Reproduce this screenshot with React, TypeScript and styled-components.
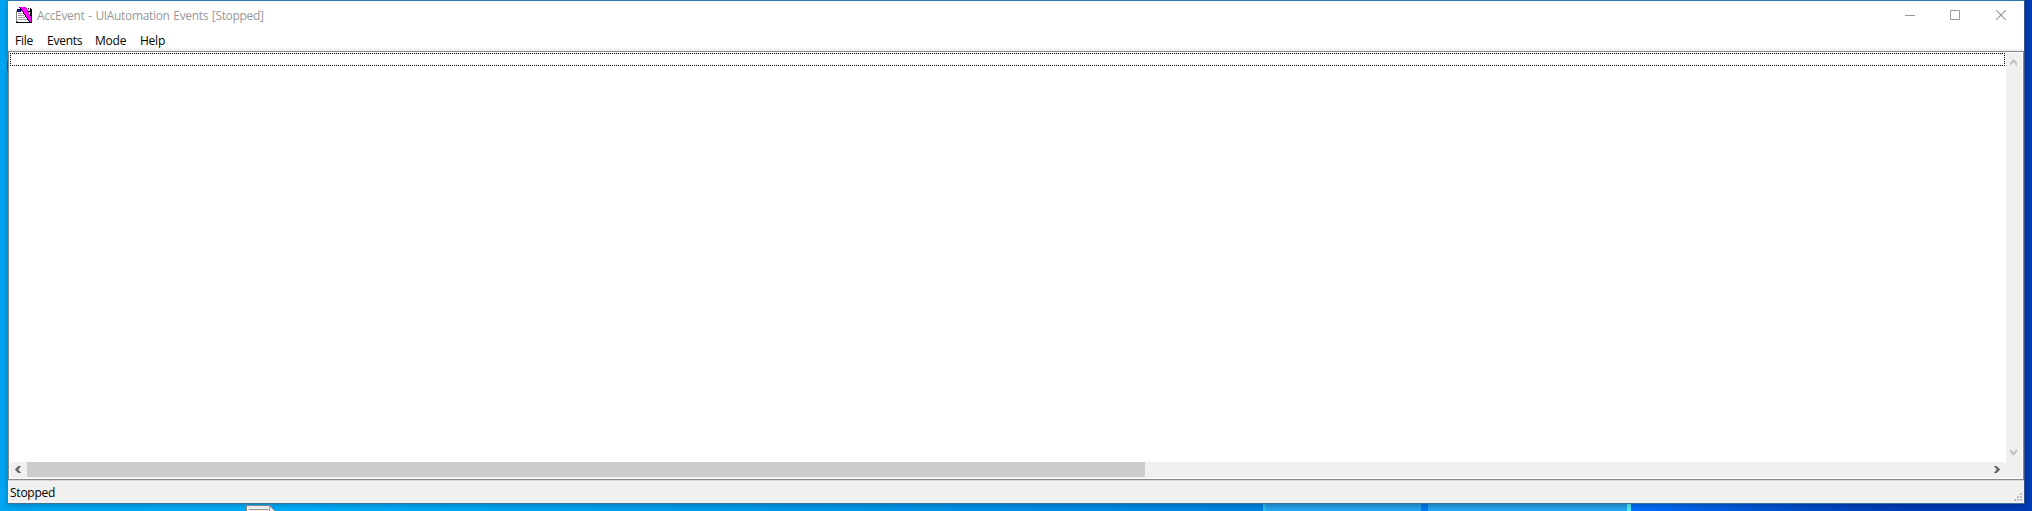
import React from 'react';
import styled, { createGlobalStyle } from 'styled-components';

const GlobalStyle = createGlobalStyle`
  html, body { margin: 0; padding: 0; overflow: hidden; }
  * { box-sizing: border-box; }
`;

const Desktop = styled.div`
  position: relative;
  width: 2032px;
  height: 511px;
  padding: 0 7px 0 8px;
  overflow: hidden;
  font: 12px/16px "Open Sans", "Noto Sans", sans-serif;
  letter-spacing: -0.24px;
  color: #000;
  background: linear-gradient(90deg, #00a4f0 0, #00acf8 300px, #009cec 700px, #0084e0 1240px, #006cf8 1640px, #0050cc 1780px, #003cb4 1900px, #003cb4 2032px);
`;

const AppWindow = styled.main`
  position: relative;
  display: flex;
  flex-direction: column;
  height: 504px;
  background: #fff;
  border-top: 1px solid #2b76a8;
  border-right: 1px solid #33528c;
  border-bottom: 1px solid #3d7292;
  box-shadow: 0 1px 5px rgba(0, 0, 0, 0.26);
`;

const TitleBar = styled.header`
  display: flex;
  flex: none;
  align-items: center;
  height: 28px;
  padding-left: 8px;
`;

const Title = styled.h1`
  flex: 1;
  margin: 2px 0 0 5px;
  font-size: 12px;
  font-weight: 400;
  letter-spacing: -0.33px;
  word-spacing: 0.9px;
  color: #999;
`;

const CaptionButton = styled.button`
  width: 46px;
  height: 28px;
  padding: 0;
  border: 0;
  background: none;
  display: grid;
  place-items: center;
`;

const MenuBar = styled.nav`
  display: flex;
  flex: none;
  height: 20px;
  padding-left: 7px;
`;

const MenuItem = styled.span<{ $width: number }>`
  width: ${p => p.$width}px;
  line-height: 24px;
`;

const ListFrame = styled.section`
  display: grid;
  flex: none;
  grid-template: 409px 16px / minmax(0, 1fr) 16px;
  height: 429px;
  padding: 1px;
  border: 1px solid #828790;
  box-shadow: 0 -2px #f0f0f0;
  margin-top: 2px;
`;

const EventList = styled.div`
  padding-right: 1px;
`;

const FocusRow = styled.div`
  height: 13px;
  background:
    repeating-linear-gradient(90deg, #000 0 1px, #fff 1px 2px) top / 100% 1px no-repeat,
    repeating-linear-gradient(90deg, #000 0 1px, #fff 1px 2px) bottom / 100% 1px no-repeat,
    repeating-linear-gradient(#000 0 1px, #fff 1px 2px) left / 1px 100% no-repeat,
    repeating-linear-gradient(#000 0 1px, #fff 1px 2px) right / 1px 100% no-repeat;
`;

const VerticalBar = styled.div`
  display: flex;
  flex-direction: column;
  justify-content: space-between;
  align-items: flex-start;
  padding: 6px 0 6px 4px;
  background: #f0f0f0;
`;

const HorizontalBar = styled.div`
  display: grid;
  grid-template-columns: 17px 1fr 17px;
  grid-column: 1 / 3;
  height: 16px;
  padding-right: 16px;
  background: #f0f0f0;
`;

const ArrowCell = styled.div`
  padding: 4px 0 0 5px;
  line-height: 0;
`;

const Thumb = styled.div`
  width: 1118px;
  height: 15px;
  background: #cdcdcd;
`;

const StatusBar = styled.footer`
  display: flex;
  flex: none;
  justify-content: space-between;
  align-items: flex-end;
  height: 23px;
  padding: 0 2px 2px 2px;
  background: #f0f0f0;
  border-top: 1px solid #d7d7d7;
`;

const StatusText = styled.span`
  height: 16px;
`;

const TaskPane = styled.div<{ $left: number; $width: number; $edge?: 'left' | 'right' }>`
  position: absolute;
  top: 503px;
  left: ${p => p.$left}px;
  width: ${p => p.$width}px;
  height: 8px;
  background: linear-gradient(#2598dc, #22a8f2);
  border-left: ${p => (p.$edge === 'left' ? '3px solid #28b8e4' : '0')};
  border-right: ${p => (p.$edge === 'right' ? '4px solid #48eaf0' : '0')};
`;

const DocumentIcon = styled.svg`
  position: absolute;
  left: 246px;
  top: 505px;
`;

const HiddenGlyph = styled.i`
  position: absolute;
  left: 7px;
  top: 61px;
  width: 1px;
  height: 10px;
  background: #174a7e;
`;

const AppIcon = () => (
  <svg width="16" height="16" shapeRendering="crispEdges">
    <path fill="#808080" d="M0 4h2v11H0z" />
    <path fill="#fff" d="M1 5h13v9H1z" />
    <path fill="#000080" d="M1 2h4v3H1z" />
    <path fill="#a0a0a0" d="M2 6h4v1H2zm0 2h6v1H2zm0 2h7v1H2zm0 2h9v1H2zM11 6h2v1h-2zm1 2h1v1h-1z" />
    <path fill="#c0c0c0" d="M10 2h4v2h-4z" />
    <path fill="#000" d="M14 2h2v14H0v-1h14zM10 1h1v1h-1zM12 1h1v1h-1zM14 1h1v1h-1z" />
    <path fill="#000" d="M3 0h1l10 14v1h-1z" />
    <path fill="#f0f" d="M4 0h6l5 10v5h-1z" />
    <path fill="#000" d="M11 4h3v1h-3z" />
  </svg>
);

const paths = {
  up: 'M0 4l3.5-4L7 4v2.5L3.5 3 0 6.5z',
  down: 'M0 0l3.5 3.5L7 0v2.5l-3.5 4L0 2.5z',
  left: 'M3.5 0H6L3 3.5 6 7H3.5L0 3.5z',
  right: 'M0 0h2.5L6 3.5 2.5 7H0l3-3.5z',
};

const Arrow = ({ direction }: { direction: keyof typeof paths }) => {
  const vertical = direction === 'up' || direction === 'down';
  const color = vertical ? '#bfbfbf' : '#606060';
  return (
    <svg width={vertical ? 7 : 6} height={7}>
      <path d={paths[direction]} fill={color} stroke={color} strokeWidth=".3" />
    </svg>
  );
};

const MinimizeIcon = styled.svg`
  margin-left: 1px;
`;

const menus = [
  { label: 'File', width: 32 },
  { label: 'Events', width: 48 },
  { label: 'Mode', width: 45 },
  { label: 'Help', width: 40 },
];

export default function App() {
  return (
    <Desktop>
      <GlobalStyle />
      <TaskPane $left={1263} $width={158} $edge="left" />
      <TaskPane $left={1428} $width={203} $edge="right" />
      <AppWindow>
        <TitleBar>
          <AppIcon />
          <Title>AccEvent - UIAutomation Events [Stopped]</Title>
          <CaptionButton aria-label="Minimize">
            <MinimizeIcon width="10" height="10"><path d="M0 5.5h10" stroke="#999" /></MinimizeIcon>
          </CaptionButton>
          <CaptionButton aria-label="Maximize">
            <svg width="10" height="10"><path d="M.5.5h9v9h-9z" fill="none" stroke="#999" /></svg>
          </CaptionButton>
          <CaptionButton aria-label="Close">
            <svg width="10" height="10"><path d="M0 0l10 10M10 0L0 10" stroke="#999" strokeWidth="1.1" /></svg>
          </CaptionButton>
        </TitleBar>
        <MenuBar>
          {menus.map(m => <MenuItem key={m.label} $width={m.width}>{m.label}</MenuItem>)}
        </MenuBar>
        <ListFrame>
          <EventList><FocusRow /></EventList>
          <VerticalBar><Arrow direction="up" /><Arrow direction="down" /></VerticalBar>
          <HorizontalBar>
            <ArrowCell><Arrow direction="left" /></ArrowCell>
            <Thumb />
            <ArrowCell><Arrow direction="right" /></ArrowCell>
          </HorizontalBar>
        </ListFrame>
        <StatusBar>
          <StatusText>Stopped</StatusText>
          <svg width="8" height="8" fill="#bfbfbf" shapeRendering="crispEdges">
            <path d="M6 0h2v2H6zM3 3h2v2H3zM6 3h2v2H6zM0 6h2v2H0zM3 6h2v2H3zM6 6h2v2H6z" />
          </svg>
        </StatusBar>
      </AppWindow>
      <HiddenGlyph />
      <DocumentIcon width="30" height="6">
        <path d="M.5 6V.5h23L29 6" fill="#eee" stroke="#888" />
        <path d="M3 4.5h19M23.5 0v6" stroke="#999" />
      </DocumentIcon>
    </Desktop>
  );
}
